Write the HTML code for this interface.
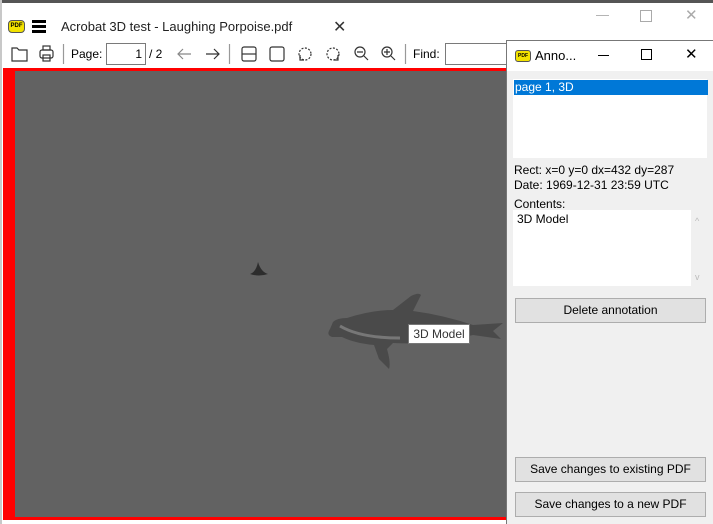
<!DOCTYPE html>
<html><head><style>
body{margin:0;width:713px;height:524px;overflow:hidden;background:#fff;position:relative;font-family:"Liberation Sans",sans-serif;font-size:12px;color:#000}
.a{position:absolute}
.btn{position:absolute;background:#e1e1e1;border:1px solid #adadad;box-sizing:border-box;text-align:center;font-size:12px;line-height:23px}
</style></head><body>
<div class="a" style="left:0;top:0;width:713px;height:3px;background:#555"></div>
<div class="a" style="left:0;top:0;width:2px;height:524px;background:#c8c8c8"></div>
<div class="a" style="left:8px;top:20px;width:15px;height:11px;background:#f2e200;border:1px solid #555;border-radius:4px;font-size:6px;font-weight:bold;line-height:11px;text-align:center">PDF</div>
<div class="a" style="left:32px;top:20px;width:14px;height:3px;background:#000;box-shadow:0 5px 0 #000,0 10px 0 #000"></div>
<div class="a" style="left:61px;top:19px;font-size:13px;color:#222">Acrobat 3D test - Laughing Porpoise.pdf</div>
<div class="a" style="left:333px;top:17px;font-size:16px;color:#333">✕</div>
<div class="a" style="left:596px;top:7px;font-size:13px;color:#aaa">—</div>
<div class="a" style="left:640px;top:10px;width:10px;height:10px;border:1px solid #aaa"></div>
<div class="a" style="left:685px;top:6px;font-size:15px;color:#aaa">✕</div>
<svg class="a" style="left:0;top:40px" width="506" height="28" fill="none" stroke="#333" stroke-width="1.2">
<path d="M12 8h5l2 2h8v11H12z"/>
<rect x="40" y="10" width="13" height="8" rx="2"/><rect x="43" y="6" width="7" height="4"/><rect x="43" y="15" width="7" height="6"/>
<line x1="63.5" y1="4" x2="63.5" y2="24" stroke="#999"/>
<path d="M178 14h13M183 9l-5 5 5 5" stroke="#888"/>
<path d="M206 14h13M214 9l5 5-5 5"/>
<line x1="229.5" y1="4" x2="229.5" y2="24" stroke="#999"/>
<rect x="242" y="7" width="14" height="14" rx="2"/><line x1="242" y1="14" x2="256" y2="14"/>
<rect x="270" y="7" width="14" height="14" rx="2"/>
<circle cx="305" cy="14" r="6" stroke-dasharray="2 1.5"/><path d="M300 15v5h4"/>
<circle cx="333" cy="14" r="6" stroke-dasharray="2 1.5"/><path d="M338 15v5h-4"/>
<circle cx="360" cy="12" r="5"/><path d="M357 12h6M364 16l4 4"/>
<circle cx="387" cy="12" r="5"/><path d="M384 12h6M387 9v6M391 16l4 4"/>
<line x1="405.5" y1="4" x2="405.5" y2="24" stroke="#999"/>
</svg>
<div class="a" style="left:71px;top:47px">Page:</div>
<div class="a" style="left:106px;top:43px;width:40px;height:22px;border:1px solid #7a7a7a;box-sizing:border-box;text-align:right;padding-right:3px;line-height:20px">1</div>
<div class="a" style="left:149px;top:47px">/ 2</div>
<div class="a" style="left:413px;top:47px">Find:</div>
<div class="a" style="left:445px;top:43px;width:70px;height:22px;border:1px solid #7a7a7a;box-sizing:border-box"></div>
<div class="a" style="left:3px;top:68px;width:510px;height:452px;background:#f00"></div>
<div class="a" style="left:15px;top:71px;width:498px;height:446px;background:#626262"></div>
<svg class="a" style="left:240px;top:250px" width="280" height="120">
<path d="M10 24q6-2 8-12q3 10 10 12q-9 3-18 0z" fill="#2d2d2d"/>
<path d="M93 72q4-4 14-4q25-8 46-8l18-14q8-4 10-1l-8 16q30 4 60 14l30-2-10 8 8 8-28-4q-40 10-80 8l-6 6q4 14 2 20l-10-10-5-14q-20-2-32-8l-10 0q-6-2-2-8z" fill="#4a4a4a"/>
<path d="M100 76q20 12 60 12" stroke="#777" fill="none" stroke-width="3"/>
</svg>
<div class="a" style="left:408px;top:324px;width:62px;height:20px;background:#fff;border:1px solid #777;box-sizing:border-box;line-height:18px;text-align:center;color:#333">3D Model</div>
<div class="a" style="left:506px;top:40px;width:207px;height:484px;background:#f0f0f0;border-left:1px solid #777;border-top:1px solid #777;box-sizing:border-box"></div>
<div class="a" style="left:507px;top:41px;width:206px;height:30px;background:#fff"></div>
<div class="a" style="left:515px;top:50px;width:14px;height:10px;background:#f2e200;border:1px solid #555;border-radius:3px;font-size:5px;font-weight:bold;line-height:10px;text-align:center">PDF</div>
<div class="a" style="left:535px;top:48px;font-size:13px">Anno...</div>
<div class="a" style="left:598px;top:55px;width:11px;height:1px;background:#000"></div>
<div class="a" style="left:641px;top:49px;width:9px;height:9px;border:1px solid #000"></div>
<div class="a" style="left:685px;top:45px;font-size:15px">✕</div>
<div class="a" style="left:513px;top:79px;width:194px;height:79px;background:#fff"></div>
<div class="a" style="left:514px;top:80px;width:193px;height:15px;background:#0078d7;color:#fff;line-height:15px;padding-left:1px">page 1, 3D</div>
<div class="a" style="left:514px;top:163px;line-height:15px">Rect: x=0 y=0 dx=432 dy=287<br>Date: 1969-12-31 23:59 UTC</div>
<div class="a" style="left:514px;top:197px">Contents:</div>
<div class="a" style="left:513px;top:210px;width:178px;height:76px;background:#fff;padding:2px 4px;box-sizing:border-box">3D Model</div>
<div class="a" style="left:695px;top:216px;font-size:9px;color:#bbb">^</div>
<div class="a" style="left:695px;top:272px;font-size:9px;color:#bbb">v</div>
<div class="btn" style="left:515px;top:298px;width:191px;height:25px">Delete annotation</div>
<div class="btn" style="left:515px;top:457px;width:191px;height:25px">Save changes to existing PDF</div>
<div class="btn" style="left:515px;top:492px;width:191px;height:25px">Save changes to a new PDF</div>
</body></html>
